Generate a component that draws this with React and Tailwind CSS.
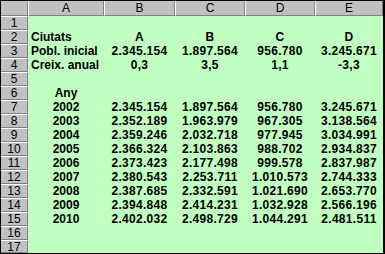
const cols = ["A", "B", "C", "D", "E"];

const years = [
  ["2002", "2.345.154", "1.897.564", "956.780", "3.245.671"],
  ["2003", "2.352.189", "1.963.979", "967.305", "3.138.564"],
  ["2004", "2.359.246", "2.032.718", "977.945", "3.034.991"],
  ["2005", "2.366.324", "2.103.863", "988.702", "2.934.837"],
  ["2006", "2.373.423", "2.177.498", "999.578", "2.837.987"],
  ["2007", "2.380.543", "2.253.711", "1.010.573", "2.744.333"],
  ["2008", "2.387.685", "2.332.591", "1.021.690", "2.653.770"],
  ["2009", "2.394.848", "2.414.231", "1.032.928", "2.566.196"],
  ["2010", "2.402.032", "2.498.729", "1.044.291", "2.481.511"],
];

// row number -> [label (left), B, C, D, E] or centered A value
const rows = {
  1: null,
  2: { label: "Ciutats", vals: ["A", "B", "C", "D"] },
  3: { label: "Pobl. inicial", vals: ["2.345.154", "1.897.564", "956.780", "3.245.671"] },
  4: { label: "Creix. anual", vals: ["0,3", "3,5", "1,1", "-3,3"] },
  5: null,
  6: { center: "Any", vals: ["", "", "", ""] },
};
years.forEach((y, i) => {
  rows[7 + i] = { center: y[0], vals: y.slice(1) };
});

export default function App() {
  const nums = Array.from({ length: 17 }, (_, i) => i + 1);
  return (
    <div className="w-[385px] h-[254px] overflow-hidden border-t border-l border-b border-r-2 border-black bg-[#c0ffc0] font-['Liberation_Sans',Arial,sans-serif] text-black">
      <div className="grid grid-cols-[27px_76px_71px_70px_70px_68px] grid-rows-[15px_repeat(16,14px)_13px]">
        <div className="bg-[#c0c0c0] border-r border-b border-[#808080]" />
        {cols.map((c) => (
          <div
            key={c}
            className="bg-[#c0c0c0] border-l border-l-white border-r border-b border-r-[#808080] border-b-[#808080] flex items-center justify-center text-[12px] leading-none"
          >
            {c}
          </div>
        ))}
        {nums.map((n) => {
          const r = rows[n];
          return (
            <Row key={n} n={n} r={r} />
          );
        })}
      </div>
    </div>
  );
}

function Row({ n, r }) {
  return (
    <>
      <div className="bg-[#c0c0c0] border-t border-t-white border-r border-b border-r-[#808080] border-b-[#808080] flex items-center justify-center text-[12px] leading-none">
        {n}
      </div>
      {r && r.label ? (
        <div className="pl-[3px] font-bold text-[12px] leading-[14px] whitespace-nowrap">{r.label}</div>
      ) : r && r.center ? (
        <div className="text-center font-bold text-[12px] leading-[14px]">{r.center}</div>
      ) : (
        <div />
      )}
      {[0, 1, 2, 3].map((i) => (
        <div key={i} className="text-center font-bold text-[12px] leading-[14px] tracking-[0.3px] whitespace-nowrap">
          {r ? r.vals[i] : ""}
        </div>
      ))}
    </>
  );
}
